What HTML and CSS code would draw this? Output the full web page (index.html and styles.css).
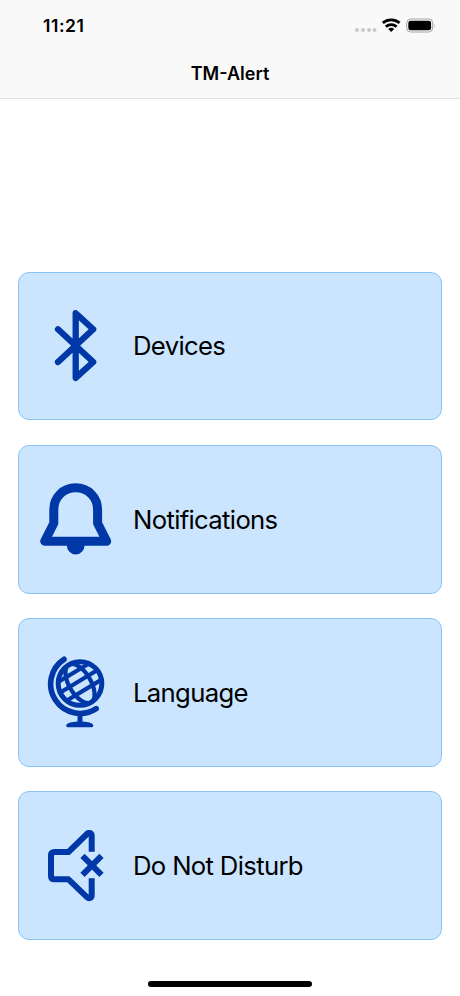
FILE: index.html
```html
<!DOCTYPE html>
<html lang="en">
<head>
<meta charset="utf-8">
<title>TM-Alert</title>
<link rel="stylesheet" href="styles.css">
</head>
<body>
<header class="header">
  <div class="status">
    <span class="time">11:21</span>
    <svg class="indicators" width="84" height="20" viewBox="0 0 84 20">
      <g fill="#c9c9cb"><circle cx="5" cy="14" r="2"/><circle cx="11" cy="14" r="2"/><circle cx="17" cy="14" r="2"/><circle cx="22.500" cy="14" r="2"/></g>
      <g fill="none" stroke="#000" stroke-width="2.800"><path d="M30.800 6.900a13 13 0 0 1 16.800 0"/><path d="M33.800 10.700a8 8 0 0 1 10.800 0"/></g>
      <path d="M36.200 13a4.600 4.600 0 0 1 6 0L39.200 16z"/>
      <rect x="54.700" y="3" width="26" height="13" rx="4" fill="none" stroke="#a4a4a6"/>
      <rect x="56.300" y="4.700" width="22.800" height="9.600" rx="2.300"/>
      <path d="M82.300 7.500q1.600 1.900 0 4z" fill="#a4a4a6"/>
    </svg>
  </div>
  <h1 class="title">TM-Alert</h1>
</header>
<main class="menu">
  <a class="card">
    <svg class="icon" viewBox="0 0 72 72"><path class="line" stroke-width="6.300" d="M18 19.300 53.200 52 35.700 67.800V3.200L53.200 19.300 18 52"/></svg>
    <span class="label">Devices</span>
  </a>
  <a class="card">
    <svg class="icon" viewBox="0 0 72 72"><path class="line" stroke-width="9" d="M35.700 4.800c-12.500 0-21.900 9.500-21.900 22V40.300L4.700 58.200H66.700L57.600 40.300V26.800c0-12.500-9.400-22-21.900-22z"/><path class="solid" d="M26.800 62h17.800a8.900 9.600 0 0 1-17.800 0z"/></svg>
    <span class="label">Notifications</span>
  </a>
  <a class="card">
    <svg class="icon" viewBox="0 0 72 72">
      <g class="line" stroke-width="5"><circle cx="40" cy="27.500" r="21.800"/><path stroke-width="5.600" d="M24 3.300A29.300 29.300 0 1 0 56.200 52.600"/>
      <g transform="rotate(-31 40 27.500)" stroke-width="4.200"><ellipse cx="40" cy="27.500" rx="10.800" ry="21.800"/><path d="M18.500 25h43M22 15h36M20.500 35.300h39"/></g></g>
      <path class="solid" d="M37.500 57h5v8.500c6 .3 10.800 1.600 10.800 4.300 0 .8-.6 1.400-1.500 1.400H27.700c-.9 0-1.500-.6-1.500-1.400 0-2.700 5.300-4 11.300-4.300z"/>
    </svg>
    <span class="label">Language</span>
  </a>
  <a class="card">
    <svg class="icon" viewBox="0 0 72 72"><path class="line flat" stroke-width="6" d="M51.700 21.700V5.500c0-2.500-2.700-3.400-4.500-1.700L28.500 22H14.500Q11 22 11 25.500V46Q11 49.300 14.500 49.300H28.500L47.200 67.300c1.800 1.700 4.500.8 4.500-1.700V48.300"/><path class="line flat" stroke-width="6" d="M42.500 25.800 61.500 44.800M61.500 25.800 42.500 44.800"/></svg>
    <span class="label">Do Not Disturb</span>
  </a>
</main>
<div class="home"></div>
</body>
</html>
```
FILE: styles.css
```css
* { box-sizing: border-box; }
body {
  margin: 0;
  height: 996px;
  display: flex;
  flex-direction: column;
  background: #fff;
  color: #000;
  font-family: Inter, sans-serif;
}
.header {
  height: 99px;
  background: #f9f9f9;
  border-bottom: 1px solid #e0e0e0;
}
.status {
  height: 51px;
  padding: 0 24px 0 43px;
  display: flex;
  align-items: center;
  justify-content: space-between;
}
.time { font-size: 17.500px; font-weight: 600; letter-spacing: 0.550px; }
.title {
  margin: 11px 0 0;
  text-align: center;
  font-size: 18px;
  line-height: 24px;
  font-weight: 600;
}
.menu {
  flex: 1;
  padding: 172.500px 18px 0;
  display: flex;
  flex-direction: column;
  gap: 24.500px;
}
.card {
  height: 148.800px;
  padding-left: 21px;
  display: flex;
  align-items: center;
  gap: 21px;
  background: #cbe5ff;
  border: 1px solid #8ac4f7;
  border-radius: 11px;
}
.icon { width: 72px; height: 72px; }
.line {
  fill: none;
  stroke: #0038a8;
  stroke-linecap: round;
  stroke-linejoin: round;
}
.flat { stroke-linecap: butt; }
.solid { fill: #0038a8; }
.label {
  padding-top: 1px;
  font-size: 25.700px;
  line-height: 32px;
  letter-spacing: -0.670px;
}
.home {
  width: 164px;
  height: 6px;
  margin: 0 auto 9px;
  border-radius: 3px;
  background: #000;
}
```
